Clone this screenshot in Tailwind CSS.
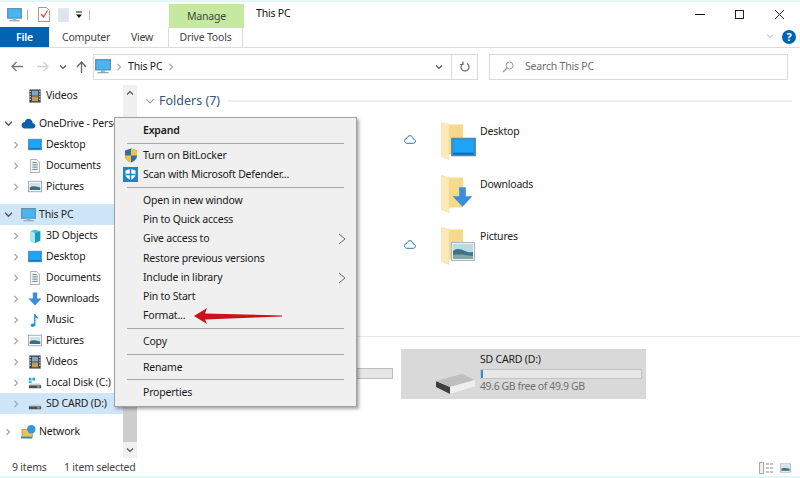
<!DOCTYPE html>
<html lang="en">
<head>
  <meta charset="UTF-8" />
  <title>This PC</title>
  <script src="https://cdn.jsdelivr.net/npm/@tailwindcss/browser@4"></script>
</head>
<body class="w-[800px] h-[478px] overflow-hidden bg-white text-[#1a1a1a] text-[10.5px] tracking-[-0.2px] font-['Noto_Sans',sans-serif]">

  <!-- shared icons -->
  <svg class="hidden">
    <symbol id="pc" viewBox="0 0 16 15">
      <rect x="0.5" y="0.5" width="15" height="10.5" fill="#3ba4e6" stroke="#6b8fa8"/>
      <rect x="1.5" y="1.5" width="13" height="8.5" fill="#49b6f2"/>
      <rect x="6" y="11" width="4" height="2" fill="#9fb4c2"/>
      <rect x="2.5" y="13" width="11" height="1.3" fill="#8ea6b6"/>
    </symbol>
    <symbol id="desk" viewBox="0 0 16 14">
      <rect x="0.5" y="1" width="15" height="12" fill="#1591e8" stroke="#5b8cb0"/>
      <rect x="1.5" y="2" width="13" height="9" fill="#1ea4f4"/>
      <rect x="1.5" y="11" width="13" height="1.5" fill="#0f6fb8"/>
    </symbol>
    <symbol id="doc" viewBox="0 0 16 16">
      <path d="M3 0.5h7l3 3v12H3z" fill="#fff" stroke="#9aa5ad"/>
      <path d="M5 4h5M5 6h6M5 8h6M5 10h6M5 12h6" stroke="#66808f" stroke-width="1"/>
    </symbol>
    <symbol id="pic" viewBox="0 0 16 14">
      <rect x="0.5" y="1" width="15" height="12" fill="#f7f9fa" stroke="#9aa5ad"/>
      <rect x="2" y="3" width="12" height="8" fill="#cfe2ec"/>
      <path d="M2 8c3-2 6-1 12 0v3H2z" fill="#3f6d80"/>
    </symbol>
    <symbol id="cube" viewBox="0 0 16 16">
      <path d="M3 2.5 8 0.5l6 2v11l-6 2.5-5-2z" fill="#46c4d8"/>
      <path d="M3 2.5 8 4.5v11.5l-5-2.500z" fill="#a6e8ef"/>
      <path d="M8 4.500l6-2v11l-6 2.500z" fill="#1a9bb5"/>
    </symbol>
    <symbol id="down" viewBox="0 0 16 16">
      <path d="M5.500 0.500h5v7h5L8 15.500 0.500 7.500h5z" fill="#3a8ddb"/>
    </symbol>
    <symbol id="music" viewBox="0 0 16 16">
      <path d="M7 1h1.500c0.500 2.500 3.500 3 3.500 6.500-1-1.500-2-2-3.500-2.500v8c0 1.800-1.800 2.800-3.500 2.800-1.200 0-2-.8-2-1.800 0-1.400 2-2.500 4-2z" fill="#1b8fd6"/>
    </symbol>
    <symbol id="video" viewBox="0 0 16 16">
      <rect x="1.500" y="0.500" width="13" height="15" fill="#3c4650"/>
      <rect x="4.500" y="2" width="7" height="5.500" fill="#7fa7c4"/>
      <rect x="4.500" y="8.500" width="7" height="5.500" fill="#c79a54"/>
      <path d="M2.500 2v1.500M2.500 5v1.500M2.500 8v1.500M2.500 11v1.500M13.500 2v1.500M13.500 5v1.500M13.500 8v1.500M13.500 11v1.500" stroke="#e8eef2" stroke-width="1.200"/>
    </symbol>
    <symbol id="drive" viewBox="0 0 16 16">
      <path d="M1 10.500h14v3.500H1z" fill="#4a4f52"/>
      <path d="M2.500 8.500h11l1.500 2H1z" fill="#c9ced1"/>
      <rect x="10.500" y="12" width="3" height="0.900" fill="#dfe5e8"/>
    </symbol>
    <symbol id="chev" viewBox="0 0 8 8">
      <path d="M2.500 1 5.500 4 2.500 7" fill="none" stroke="#a6a6a6" stroke-width="1.200"/>
    </symbol>
    <symbol id="chevd" viewBox="0 0 8 8">
      <path d="M1 2.500 4 5.500 7 2.500" fill="none" stroke="#555" stroke-width="1.200"/>
    </symbol>
    <symbol id="cloud" viewBox="0 0 12 9">
      <path d="M3 8.300h6.200c1.300 0 2.300-.9 2.300-2.100S10.500 4.100 9.300 4.100C9 2 7.700.7 6 .7 4.500.7 3.200 1.800 3 3.300 1.500 3.400.5 4.500.5 5.800S1.600 8.300 3 8.300z" fill="none" stroke="#2a7ab0" stroke-width="1"/>
    </symbol>
    <symbol id="folder" viewBox="0 0 36 38">
      <path d="M8 2.500h14v30H8z" fill="#f6da8c"/>
      <path d="M0.500 0.500 8 2.500v35l-7.500-3z" fill="#fbeab8" stroke="#ecd797" stroke-width="0.500"/>
    </symbol>
    <symbol id="photo" viewBox="0 0 24 19">
      <rect x="0.500" y="0.500" width="23" height="18" fill="#eef1f3" stroke="#a9b4ba"/>
      <rect x="2" y="2" width="20" height="15" fill="#bcd9e6"/>
      <path d="M2 9c4-3 8-2 12 0s6 1 8 1v7H2z" fill="#3f7488"/>
      <path d="M2 13c6-1 12 0 20 1v3H2z" fill="#7fa8a4"/>
    </symbol>
  </svg>

  <div class="w-[800px] h-[478px] relative flex flex-col border-t-2 border-b-2 border-[#e3f7fb]">

    <!-- title row -->
    <div class="h-[25px] flex items-center shrink-0 relative">
      <svg class="w-[15px] h-[14px] ml-[7px]"><use href="#pc"/></svg>
      <div class="w-px h-[10px] bg-[#aaa] ml-[5px]"></div>
      <svg class="w-[12px] h-[15px] ml-[10px]" viewBox="0 0 12 15">
        <path d="M0.500 0.500h8l3 3v11H.5z" fill="#fff" stroke="#a89a8c"/>
        <path d="M3 7l2.500 3L9.500 3.500" fill="none" stroke="#c8443a" stroke-width="1.200"/>
      </svg>
      <div class="w-[11px] h-[14px] ml-[8px] bg-[#dde4ee] border border-[#e3e8f0]"></div>
      <svg class="w-[8px] h-[8px] ml-[6px]" viewBox="0 0 8 8"><path d="M1 1h6" stroke="#111" stroke-width="1"/><path d="M1 3.500h6L4 7z" fill="#111"/></svg>
      <div class="w-px h-[10px] bg-[#bbb] ml-[6px]"></div>
      <div class="w-[75px] h-[24px] mt-[2px] ml-[79px] pt-[2px] bg-[#c6e9a2] flex items-center justify-center text-[#3d4a3a]">Manage</div>
      <div class="ml-[12px] mb-[2px] text-[#111]">This PC</div>
      <div class="ml-auto flex items-center">
        <div class="w-[10px] h-px bg-[#111]"></div>
        <div class="w-[9px] h-[9px] border border-[#222] ml-[30px]"></div>
        <svg class="w-[11px] h-[11px] ml-[30px] mr-[15px]" viewBox="0 0 11 11"><path d="M1 1l9 9M10 1l-9 9" stroke="#222" stroke-width="1"/></svg>
      </div>
    </div>

    <!-- ribbon tabs -->
    <div class="h-[20px] flex border-b border-[#dcdcdc] shrink-0 relative box-content">
      <div class="w-[49px] bg-[#0063b1] text-white font-semibold flex items-center justify-center pt-[1px]">File</div>
      <div class="ml-[13px] w-[44px] flex items-center text-[#444] pt-[2px]">Computer</div>
      <div class="ml-[25px] w-[22px] flex items-center text-[#444] pt-[2px]">View</div>
      <div class="ml-[15px] w-[75px] border-x border-[#dcdcdc] flex items-center justify-center text-[#444] pt-[2px]">Drive Tools</div>
      <svg class="w-[8px] h-[8px] absolute left-[766px] top-[5px]" viewBox="0 0 8 8"><path d="M1 2.500 4 5.500 7 2.500" fill="none" stroke="#aaa" stroke-width="1"/></svg>
      <div class="w-[14px] h-[14px] rounded-full bg-[#0063b1] text-white font-bold text-[11px] leading-[14px] text-center absolute left-[782px] top-[3px]">?</div>
    </div>

    <!-- address row -->
    <div class="h-[37px] flex items-center shrink-0">
      <svg class="w-[12px] h-[11px] ml-[11px]" viewBox="0 0 12 11"><path d="M5.500 1 1 5.500 5.500 10M1 5.500h11" fill="none" stroke="#777" stroke-width="1.300"/></svg>
      <svg class="w-[12px] h-[11px] ml-[14px]" viewBox="0 0 12 11"><path d="M6.500 1 11 5.500 6.500 10M11 5.500H0" fill="none" stroke="#d0d0d0" stroke-width="1.300"/></svg>
      <svg class="w-[8px] h-[8px] ml-[10px]"><use href="#chevd"/></svg>
      <svg class="w-[11px] h-[12px] ml-[9px]" viewBox="0 0 11 12"><path d="M1 6 5.500 1 10 6M5.500 1v11" fill="none" stroke="#666" stroke-width="1.300"/></svg>
      <div class="w-[385px] h-[26px] ml-[6px] flex items-center border border-[#dadada] relative">
        <svg class="w-[16px] h-[15px] ml-[1px]"><use href="#pc"/></svg>
        <svg class="w-[8px] h-[8px] ml-[4px]"><use href="#chev"/></svg>
        <span class="ml-[5px] text-[#222]">This PC</span>
        <svg class="w-[8px] h-[8px] ml-[5px]"><use href="#chev"/></svg>
        <svg class="w-[8px] h-[8px] ml-auto mr-[34px]"><use href="#chevd"/></svg>
        <div class="w-[26px] h-[24px] border-l border-[#dadada] absolute right-0 top-0 flex items-center justify-center">
          <svg class="w-[10px] h-[11px]" viewBox="0 0 10 11"><path d="M3 2.500a4 4 0 1 0 4 0M3 .5v3H0" fill="none" stroke="#666" stroke-width="1.200"/></svg>
        </div>
      </div>
      <div class="w-[299px] h-[26px] ml-[11px] flex items-center border border-[#dadada] text-[#6e6e6e]">
        <svg class="w-[12px] h-[12px] ml-[12px]" viewBox="0 0 12 12"><circle cx="7.500" cy="4.500" r="3.500" fill="none" stroke="#999"/><path d="M5 7 1 11" stroke="#999" stroke-width="1.200"/></svg>
        <span class="ml-[11px]">Search This PC</span>
      </div>
    </div>

    <!-- main area -->
    <div class="flex flex-1 min-h-0 relative">

      <!-- nav tree -->
      <div class="w-[123px] shrink-0 overflow-hidden whitespace-nowrap text-[#222]">
        <div class="h-[21px] flex items-center pl-[28px]"><svg class="w-[14px] h-[14px] shrink-0"><use href="#video"/></svg><span class="ml-[4px]">Videos</span></div>
        <div class="h-[21px] flex items-center mt-[7px] pl-[4px]"><svg class="w-[9px] h-[9px] shrink-0"><use href="#chevd"/></svg><svg class="w-[15px] h-[11px] ml-[8px] shrink-0" viewBox="0 0 12 9"><path d="M3 8.500h6.500c1.200 0 2.200-.9 2.200-2.100S10.700 4.200 9.500 4.200C9.200 2 7.700.7 6 .7 4.500.7 3.200 1.800 3 3.300 1.500 3.400.3 4.500.3 5.900s1.200 2.600 2.700 2.600z" fill="#0f5ea8"/></svg><span class="ml-[3px]">OneDrive - Personal</span></div>
        <div class="h-[21px] flex items-center pl-[12px]"><svg class="w-[8px] h-[8px] shrink-0"><use href="#chev"/></svg><svg class="w-[14px] h-[13px] ml-[8px] shrink-0"><use href="#desk"/></svg><span class="ml-[4px]">Desktop</span></div>
        <div class="h-[21px] flex items-center pl-[12px]"><svg class="w-[8px] h-[8px] shrink-0"><use href="#chev"/></svg><svg class="w-[14px] h-[14px] ml-[8px] shrink-0"><use href="#doc"/></svg><span class="ml-[4px]">Documents</span></div>
        <div class="h-[21px] flex items-center pl-[12px]"><svg class="w-[8px] h-[8px] shrink-0"><use href="#chev"/></svg><svg class="w-[14px] h-[13px] ml-[8px] shrink-0"><use href="#pic"/></svg><span class="ml-[4px]">Pictures</span></div>
        <div class="h-[21px] flex items-center mt-[7px] pl-[4px] bg-[#cfe6f8]"><svg class="w-[9px] h-[9px] shrink-0"><use href="#chevd"/></svg><svg class="w-[15px] h-[14px] ml-[8px] shrink-0"><use href="#pc"/></svg><span class="ml-[3px]">This PC</span></div>
        <div class="h-[21px] flex items-center pl-[12px]"><svg class="w-[8px] h-[8px] shrink-0"><use href="#chev"/></svg><svg class="w-[14px] h-[14px] ml-[8px] shrink-0"><use href="#cube"/></svg><span class="ml-[4px]">3D Objects</span></div>
        <div class="h-[21px] flex items-center pl-[12px]"><svg class="w-[8px] h-[8px] shrink-0"><use href="#chev"/></svg><svg class="w-[14px] h-[13px] ml-[8px] shrink-0"><use href="#desk"/></svg><span class="ml-[4px]">Desktop</span></div>
        <div class="h-[21px] flex items-center pl-[12px]"><svg class="w-[8px] h-[8px] shrink-0"><use href="#chev"/></svg><svg class="w-[14px] h-[14px] ml-[8px] shrink-0"><use href="#doc"/></svg><span class="ml-[4px]">Documents</span></div>
        <div class="h-[21px] flex items-center pl-[12px]"><svg class="w-[8px] h-[8px] shrink-0"><use href="#chev"/></svg><svg class="w-[14px] h-[14px] ml-[8px] shrink-0"><use href="#down"/></svg><span class="ml-[4px]">Downloads</span></div>
        <div class="h-[21px] flex items-center pl-[12px]"><svg class="w-[8px] h-[8px] shrink-0"><use href="#chev"/></svg><svg class="w-[14px] h-[14px] ml-[8px] shrink-0"><use href="#music"/></svg><span class="ml-[4px]">Music</span></div>
        <div class="h-[21px] flex items-center pl-[12px]"><svg class="w-[8px] h-[8px] shrink-0"><use href="#chev"/></svg><svg class="w-[14px] h-[13px] ml-[8px] shrink-0"><use href="#pic"/></svg><span class="ml-[4px]">Pictures</span></div>
        <div class="h-[21px] flex items-center pl-[12px]"><svg class="w-[8px] h-[8px] shrink-0"><use href="#chev"/></svg><svg class="w-[14px] h-[14px] ml-[8px] shrink-0"><use href="#video"/></svg><span class="ml-[4px]">Videos</span></div>
        <div class="h-[21px] flex items-center pl-[12px]"><svg class="w-[8px] h-[8px] shrink-0"><use href="#chev"/></svg>
          <svg class="w-[14px] h-[14px] ml-[8px] shrink-0" viewBox="0 0 16 16"><use href="#drive"/><path d="M1 2h3v3H1zM5 2h3v3H5zM1 6h3v2H1z" fill="#24a6c8"/></svg><span class="ml-[4px]">Local Disk (C:)</span></div>
        <div class="h-[21px] flex items-center pl-[12px] bg-[#cfe6f8]"><svg class="w-[8px] h-[8px] shrink-0"><use href="#chev"/></svg><svg class="w-[14px] h-[14px] ml-[8px] shrink-0"><use href="#drive"/></svg><span class="ml-[4px]">SD CARD (D:)</span></div>
        <div class="h-[21px] flex items-center mt-[7px] pl-[4px]"><svg class="w-[8px] h-[8px] shrink-0"><use href="#chev"/></svg>
          <svg class="w-[15px] h-[14px] ml-[9px] shrink-0" viewBox="0 0 16 15"><rect x="1" y="5" width="11" height="8" fill="#f2c14e" stroke="#8a7a3a" stroke-width="0.600"/><rect x="0" y="12.500" width="12" height="2" fill="#2d8fd0"/><circle cx="11" cy="4.500" r="4.500" fill="#2f97dc"/></svg><span class="ml-[3px]">Network</span></div>
      </div>

      <!-- scrollbar -->
      <div class="w-[14px] shrink-0 bg-[#f0f0f0] flex flex-col items-center">
        <svg class="w-[8px] h-[8px] mt-[4px] rotate-180 shrink-0"><use href="#chevd"/></svg>
        <div class="w-full flex-1 bg-[#cdcdcd] mt-[28px] mb-[4px]"></div>
        <svg class="w-[8px] h-[8px] mb-[4px] shrink-0"><use href="#chevd"/></svg>
      </div>

      <!-- content -->
      <div class="flex-1 min-w-0">
        <div class="h-[32px] flex items-center pl-[8px] text-[12.5px] tracking-normal text-[#3a5378]">
          <svg class="w-[10px] h-[10px]" viewBox="0 0 8 8"><path d="M1 2.500 4 5.500 7 2.500" fill="none" stroke="#8a9bb0" stroke-width="0.900"/></svg>
          <span class="ml-[4px]">Folders (7)</span>
          <div class="flex-1 h-[2px] bg-[#ededed] ml-[8px] mr-[8px]"></div>
        </div>
        <div class="mt-[3px] pl-[267px] h-[158px] flex flex-col">
          <div class="h-[52.5px] flex items-start">
            <svg class="w-[12px] h-[9px] mt-[15px]"><use href="#cloud"/></svg>
            <div class="w-[36px] h-[38px] ml-[25px] mt-[2px] relative">
              <svg class="w-[36px] h-[38px]"><use href="#folder"/></svg>
              <svg class="absolute left-[10px] top-[15px] w-[25px] h-[20px]" viewBox="0 0 16 14" preserveAspectRatio="none"><use href="#desk"/></svg>
            </div>
            <span class="ml-[3px] mt-[4px] text-[#222]">Desktop</span>
          </div>
          <div class="h-[52.5px] flex items-start">
            <div class="w-[12px]"></div>
            <div class="w-[36px] h-[38px] ml-[25px] mt-[2px] relative">
              <svg class="w-[36px] h-[38px]"><use href="#folder"/></svg>
              <svg class="absolute left-[11px] top-[11px] w-[21px] h-[22px]"><use href="#down"/></svg>
            </div>
            <span class="ml-[3px] mt-[4px] text-[#222]">Downloads</span>
          </div>
          <div class="h-[52.5px] flex items-start">
            <svg class="w-[12px] h-[9px] mt-[15px]"><use href="#cloud"/></svg>
            <div class="w-[36px] h-[38px] ml-[25px] mt-[2px] relative">
              <svg class="absolute left-0 top-0 w-[36px] h-[38px]"><use href="#folder"/></svg>
              <svg class="absolute left-[10px] top-[15px] w-[24px] h-[19px]"><use href="#photo"/></svg>
            </div>
            <span class="ml-[3px] mt-[4px] text-[#222]">Pictures</span>
          </div>
        </div>
        <div class="h-px bg-[#e8e8e8] mt-[58px]"></div>
        <div class="mt-[12px] flex items-start pl-[220px]">
          <div class="w-[36px] h-[11px] mt-[19px] bg-[#e6e6e6] border border-[#bcbcbc] border-l-0"></div>
          <div class="w-[245px] h-[50px] ml-[8px] bg-[#d9d9d9] flex pl-[35px]">
            <svg class="w-[39px] h-[21px] mt-[24px] shrink-0" viewBox="0 0 39 21">
              <path d="M0 8 14 14v7L0 14z" fill="#3f3f3f"/>
              <path d="M0 8 26 1 39 7 14 14z" fill="#bfbfbf"/>
              <path d="M14 14 39 7v6L14 21z" fill="#efefef"/>
            </svg>
            <div class="ml-[5px] flex-1 pr-[4px]">
              <div class="h-[20px] leading-[20px] text-[#222]">SD CARD (D:)</div>
              <div class="h-[10px] bg-[#e6e6e6] border border-[#c4c4c4] flex"><div class="w-[2px] bg-[#2b8fd0]"></div></div>
              <div class="text-[#6f6f6f] tracking-[-0.4px]">49.6 GB free of 49.9 GB</div>
            </div>
          </div>
        </div>
      </div>
    </div>

    <!-- status bar -->
    <div class="h-[18px] shrink-0 flex items-center pl-[12px] pr-[9px] pt-[1px] text-[#444]">
      <span class="w-[52px]">9 items</span>
      <span>1 item selected</span>
      <div class="ml-auto flex items-center gap-[6px]">
        <svg class="w-[15px] h-[12px]" viewBox="0 0 15 12"><rect x=".5" y=".5" width="4" height="11" fill="#eee" stroke="#aaa"/><path d="M7 2h3M11 2h3M7 6h3M11 6h3M7 10h3M11 10h3" stroke="#888"/></svg>
        <svg class="w-[11px] h-[12px]"><use href="#pic"/></svg>
      </div>
    </div>

    <!-- context menu -->
    <div class="absolute left-[114px] top-[115px] w-[243px] h-[290px] bg-[#f0f0f0] border border-[#a0a0a0] shadow-[2px_2px_3px_rgba(0,0,0,0.35)] flex flex-col pt-[3px] px-[2px] text-[#1a1a1a]">
      <div class="h-[19px] leading-[19px] pl-[26px] font-semibold">Expand</div>
      <div class="h-px bg-[#a8a8a8] mx-[10px] mt-[3px] mb-[2px]"></div>
      <div class="h-[19px] leading-[19px] pl-[26px] relative">
        <svg class="absolute left-[7px] top-[2px] w-[14px] h-[15px]" viewBox="0 0 14 15"><path d="M7 .5 13 2.500V8c0 3-3 5.500-6 6.500C4 13.500 1 11 1 8V2.500z" fill="#2d6ea8"/><path d="M7 .5 13 2.500V7.500H7zM7 7.500V14.500C4 13.500 1 11 1 7.500z" fill="#f5c33b"/></svg>
        Turn on BitLocker
      </div>
      <div class="h-[19px] leading-[19px] pl-[26px] relative">
        <svg class="absolute left-[6px] top-[2px] w-[15px] h-[15px]" viewBox="0 0 15 15"><rect width="15" height="15" fill="#1c86c8"/><path d="M7.500 2 12.500 3.500V7.500c0 2.500-2.500 4.500-5 5.500-2.500-1-5-3-5-5.500V3.500z" fill="#fff"/><path d="M7.500 2v11M2.500 7.500h10" stroke="#1c86c8" stroke-width="1.500"/></svg>
        Scan with Microsoft Defender...
      </div>
      <div class="h-px bg-[#a8a8a8] mx-[10px] mt-[3px] mb-[3px]"></div>
      <div class="h-[19px] leading-[19px] pl-[26px]">Open in new window</div>
      <div class="h-[19px] leading-[19px] pl-[26px]">Pin to Quick access</div>
      <div class="h-[19px] leading-[19px] pl-[26px] flex justify-between pr-[8px] items-center">Give access to <svg class="w-[8px] h-[12px]" viewBox="0 0 8 12"><path d="M1 1l6 5-6 5" fill="none" stroke="#666"/></svg></div>
      <div class="h-[20px] leading-[20px] pl-[26px]">Restore previous versions</div>
      <div class="h-[19px] leading-[19px] pl-[26px] flex justify-between pr-[8px] items-center">Include in library <svg class="w-[8px] h-[12px]" viewBox="0 0 8 12"><path d="M1 1l6 5-6 5" fill="none" stroke="#666"/></svg></div>
      <div class="h-[19px] leading-[19px] pl-[26px]">Pin to Start</div>
      <div class="h-[19px] leading-[19px] pl-[26px]">Format...</div>
      <div class="h-px bg-[#a8a8a8] mx-[10px] my-[3px]"></div>
      <div class="h-[19px] leading-[19px] pl-[26px]">Copy</div>
      <div class="h-px bg-[#a8a8a8] mx-[10px] my-[3px]"></div>
      <div class="h-[19px] leading-[19px] pl-[26px]">Rename</div>
      <div class="h-px bg-[#a8a8a8] mx-[10px] mt-[2px] mb-[3px]"></div>
      <div class="h-[19px] leading-[19px] pl-[26px]">Properties</div>
    </div>

    <!-- red arrow over the menu -->
    <svg class="absolute left-[193px] top-[303px] w-[90px] h-[22px]" viewBox="0 0 90 22">
      <path d="M1 11 14 3 12 8.500 89 10.500V11.500L12 14.500 14 19z" fill="#cc1119"/>
    </svg>
  </div>

</body>
</html>
